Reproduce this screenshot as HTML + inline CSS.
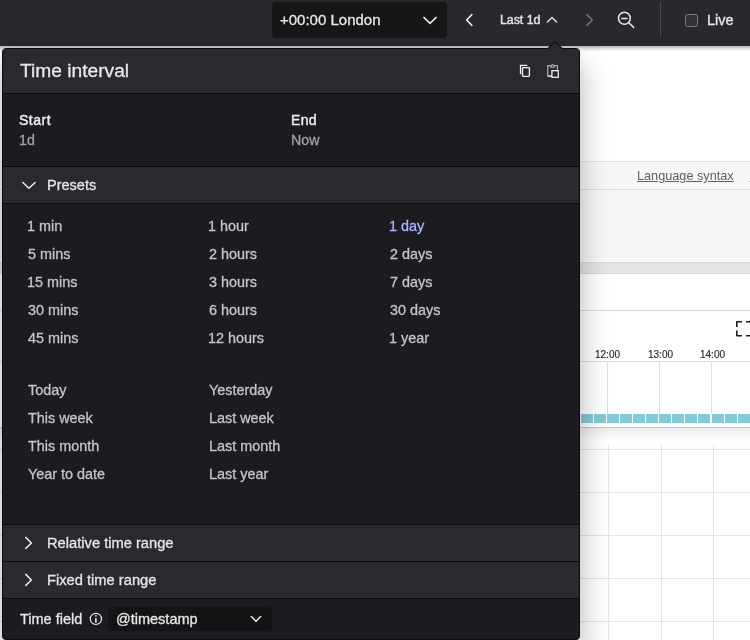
<!DOCTYPE html>
<html><head><meta charset="utf-8">
<style>
*{box-sizing:border-box;margin:0;padding:0}
html,body{width:750px;height:640px;overflow:hidden;background:#fff;font-family:"Liberation Sans",sans-serif}
.a{position:absolute}
.t{position:absolute;white-space:pre;line-height:1;will-change:transform;-webkit-text-stroke:0.3px currentColor}
.m{-webkit-text-stroke:0.45px currentColor}
.p{font-size:14.4px;color:#c4c4c8}
/* page background */
#bg{position:absolute;left:0;top:45px;width:750px;height:595px;background:#fff}
#topbar{position:absolute;left:0;top:0;width:750px;height:46px;background:#28282d}
#pop{position:absolute;left:2px;top:48px;width:578px;height:592px;background:#1c1c20;border:1px solid #0b0b0d;border-radius:4px;box-shadow:0 16px 30px rgba(0,0,0,0.3)}
</style></head><body>
<div id="bg">
  <div class="a" style="left:0;top:116px;width:750px;height:1px;background:#e5e5e5"></div>
  <div class="a" style="left:0;top:117px;width:750px;height:99px;background:#f7f7f7"></div>
  <div class="a" style="left:0;top:144px;width:750px;height:1px;background:#dedede"></div>
  <div class="a" style="left:0;top:217px;width:750px;height:1px;background:#d4d4d4"></div>
  <div class="a" style="left:0;top:218px;width:750px;height:10px;background:#e5e5e5"></div>
  <div class="a" style="left:0;top:228px;width:750px;height:1px;background:#dadada"></div>
  <div class="a" style="left:0;top:265px;width:750px;height:1px;background:#d8d8d8"></div>
  <span class="t" style="left:637px;top:125px;font-size:12.7px;color:#606060;text-decoration:underline;-webkit-text-stroke:0">Language syntax</span>
  <div class="a" style="left:749px;top:136px;width:1px;height:1px;background:#b0b0b0"></div>
  <svg class="a" style="left:735px;top:275px" width="15" height="17" viewBox="0 0 15 17"><path d="M7 1.8 H1.8 V7 M1.8 10.5 V15.8 H7 M11 1.8 H15 M11 15.8 H15" fill="none" stroke="#1e1e1e" stroke-width="1.6" stroke-linejoin="round"/></svg>
  <span class="t" style="left:595px;top:305px;font-size:10px;color:#2a2a2a;-webkit-text-stroke:0.15px #2a2a2a">12:00</span>
  <span class="t" style="left:647.5px;top:305px;font-size:10px;color:#2a2a2a;-webkit-text-stroke:0.15px #2a2a2a">13:00</span>
  <span class="t" style="left:699.5px;top:305px;font-size:10px;color:#2a2a2a;-webkit-text-stroke:0.15px #2a2a2a">14:00</span>
  <div class="a" style="left:0;top:316px;width:750px;height:1px;background:#dcdcdc"></div>
  <div class="a" style="left:607px;top:316px;width:1px;height:53px;background:#e2e2e2"></div>
  <div class="a" style="left:659px;top:316px;width:1px;height:53px;background:#e2e2e2"></div>
  <div class="a" style="left:711px;top:316px;width:1px;height:53px;background:#e2e2e2"></div>
  <div class="a" id="blocks" style="left:581px;top:369px;width:170px;height:9px;background:repeating-linear-gradient(90deg,#84c9d9 0,#84c9d9 12px,#fff 12px,#fff 13.05px)"></div>
  <div class="a" style="left:0;top:382px;width:750px;height:1px;background:#c4c4c4"></div>
  <div class="a" style="left:0;top:383px;width:750px;height:14px;background:linear-gradient(#ededed,#fff)"></div>
  <div class="a" style="left:608px;top:400px;width:1px;height:200px;background:#e5e5e5"></div>
  <div class="a" style="left:661px;top:400px;width:1px;height:200px;background:#e5e5e5"></div>
  <div class="a" style="left:713px;top:400px;width:1px;height:200px;background:#e5e5e5"></div>
  <div class="a" style="left:0;top:404px;width:750px;height:1px;background:#e5e5e5"></div>
  <div class="a" style="left:0;top:447px;width:750px;height:1px;background:#e5e5e5"></div>
  <div class="a" style="left:0;top:490px;width:750px;height:1px;background:#e5e5e5"></div>
  <div class="a" style="left:0;top:533px;width:750px;height:1px;background:#e5e5e5"></div>
  <div class="a" style="left:0;top:576px;width:750px;height:1px;background:#e5e5e5"></div>
  <div class="a" style="left:0;top:1px;width:750px;height:6px;background:linear-gradient(rgba(0,0,0,0.3),rgba(0,0,0,0.22) 20%,rgba(0,0,0,0.1) 50%,rgba(0,0,0,0.02) 85%,rgba(0,0,0,0))"></div>
</div>
<div id="topbar">
  <div class="a" style="left:272px;top:2px;width:175px;height:36px;background:#161618;border-radius:4px"></div>
  <span class="t" style="left:280px;top:12px;font-size:15px;color:#e8e8ea">+00:00 London</span>
  <svg class="a" style="left:418px;top:8px" width="24" height="24" viewBox="0 0 24 24"><path d="M5.8 9.4 L12 15.4 L18.2 9.4" fill="none" stroke="#ececee" stroke-width="1.5" stroke-linecap="round" stroke-linejoin="round"/></svg>
  <svg class="a" style="left:460px;top:8px" width="20" height="24" viewBox="0 0 20 24"><path d="M11.9 6.6 L6.6 12 L11.9 17.4" fill="none" stroke="#f0f0f2" stroke-width="1.5" stroke-linecap="round" stroke-linejoin="round"/></svg>
  <span class="t" style="left:499.5px;top:14px;font-size:12.3px;-webkit-text-stroke:0.4px #e8e8ea;color:#e8e8ea">Last 1d</span>
  <svg class="a" style="left:540px;top:8px" width="24" height="24" viewBox="0 0 24 24"><path d="M7.5 13.9 L12 9.6 L16.5 13.9" fill="none" stroke="#e8e8ea" stroke-width="1.4" stroke-linecap="round" stroke-linejoin="round"/></svg>
  <svg class="a" style="left:578px;top:8px" width="24" height="24" viewBox="0 0 24 24"><path d="M8.8 6.6 L14.3 12 L8.8 17.4" fill="none" stroke="#727288" stroke-width="1.5" stroke-linecap="round" stroke-linejoin="round"/></svg>
  <svg class="a" style="left:610px;top:5px" width="30" height="30" viewBox="0 0 30 30"><circle cx="14.4" cy="13.25" r="5.9" fill="none" stroke="#ececee" stroke-width="1.5"/><path d="M11.2 13.5 H17.6" stroke="#ececee" stroke-width="1.5"/><path d="M18.8 17.7 L23.6 22.4" stroke="#ececee" stroke-width="1.5" stroke-linecap="round"/></svg>
  <div class="a" style="left:660px;top:2px;width:1px;height:35px;background:#48484e"></div>
  <div class="a" style="left:685px;top:14px;width:13px;height:13px;border:1.3px solid #7c7c7e;background:#333335;border-radius:2.5px"></div>
  <span class="t" style="left:706.5px;top:13px;font-size:14.5px;color:#e8e8ea">Live</span>
</div>

<div id="pop"></div>
<svg class="a" style="left:545px;top:40px" width="20" height="10" viewBox="0 0 20 10"><path d="M1.5 9 L10 0.9 L18.5 9 Z" fill="#0b0b0d"/><path d="M2.6 9.6 L10 2.3 L17.4 9.6 Z" fill="#29292e"/></svg>

<div class="a" style="left:3px;top:49px;width:576px;height:44px;background:#29292e"></div>
<div class="a" style="left:3px;top:93px;width:576px;height:1px;background:#0c0c0e"></div>
<span class="t" style="left:20px;top:61px;font-size:19.2px;color:#e8e8ea">Time interval</span>
<svg class="a" style="left:516px;top:60px" width="20" height="22" viewBox="0 0 20 22"><path d="M4.5 13.7 V5.4 H10.8" fill="none" stroke="#f4f4f6" stroke-width="1.3" stroke-linecap="round"/><rect x="6.5" y="7.6" width="6.9" height="8.7" rx="0.5" fill="none" stroke="#f4f4f6" stroke-width="1.3"/></svg>
<svg class="a" style="left:543px;top:60px" width="20" height="22" viewBox="0 0 20 22"><path d="M9 16.1 H4.8 V5.7 H14.4 V10" fill="none" stroke="#a8a8aa" stroke-width="1.3"/><path d="M4.8 16.1 H9" stroke="#dcdcde" stroke-width="1.3"/><path d="M7.2 7.8 V5.5 L9.5 3.8 L11.8 5.5 V7.8 Z" fill="#a8a8aa"/><circle cx="9.5" cy="6.1" r="0.75" fill="#29292e"/><rect x="8.9" y="10.7" width="6.4" height="6.6" fill="none" stroke="#ececee" stroke-width="1.3"/></svg>
<span class="t m" style="left:19px;top:113px;font-size:14px;letter-spacing:0.5px;color:#ececee">Start</span>
<span class="t" style="left:19px;top:133px;font-size:14.2px;color:#a2a2a6">1d</span>
<span class="t m" style="left:291px;top:113px;font-size:14px;letter-spacing:0.3px;color:#ececee">End</span>
<span class="t" style="left:291px;top:133px;font-size:14.2px;color:#a2a2a6">Now</span>
<div class="a" style="left:3px;top:166px;width:576px;height:1px;background:#0c0c0e"></div>
<div class="a" style="left:3px;top:167px;width:576px;height:36px;background:#29292e"></div>
<div class="a" style="left:3px;top:203px;width:576px;height:1px;background:#0c0c0e"></div>
<svg class="a" style="left:16px;top:172px" width="24" height="24" viewBox="0 0 24 24"><path d="M6.9 10.5 L12.9 16.3 L19.1 10.5" fill="none" stroke="#ececee" stroke-width="1.5" stroke-linecap="round" stroke-linejoin="round"/></svg>
<span class="t" style="left:47px;top:178px;font-size:14.5px;color:#e6e6e8">Presets</span>
<div class="a" style="left:3px;top:524px;width:576px;height:1px;background:#0c0c0e"></div>
<div class="a" style="left:3px;top:525px;width:576px;height:36px;background:#29292e"></div>
<div class="a" style="left:3px;top:561px;width:576px;height:1px;background:#0c0c0e"></div>
<div class="a" style="left:3px;top:562px;width:576px;height:36px;background:#29292e"></div>
<div class="a" style="left:3px;top:598px;width:576px;height:1px;background:#0c0c0e"></div>
<svg class="a" style="left:16px;top:531px" width="24" height="24" viewBox="0 0 24 24"><path d="M9.75 6.4 L15.4 12 L9.75 17.4" fill="none" stroke="#ececee" stroke-width="1.5" stroke-linecap="round" stroke-linejoin="round"/></svg>
<span class="t" style="left:47px;top:536px;font-size:14.7px;color:#e6e6e8">Relative time range</span>
<svg class="a" style="left:16px;top:568px" width="24" height="24" viewBox="0 0 24 24"><path d="M9.75 6.4 L15.4 12 L9.75 17.4" fill="none" stroke="#ececee" stroke-width="1.5" stroke-linecap="round" stroke-linejoin="round"/></svg>
<span class="t" style="left:47px;top:573px;font-size:14.7px;color:#e6e6e8">Fixed time range</span>
<span class="t" style="left:20px;top:612px;font-size:14.5px;color:#e6e6e8">Time field</span>
<svg class="a" style="left:86px;top:607px" width="20" height="24" viewBox="0 0 20 24"><circle cx="9.9" cy="11.9" r="5.6" fill="none" stroke="#e8e8ea" stroke-width="1.2"/><rect x="9.1" y="11.2" width="1.6" height="4.4" fill="#f0f0f2"/><rect x="9.1" y="8.1" width="1.6" height="1.6" fill="#d8d8da"/></svg>
<div class="a" style="left:108px;top:607px;width:164px;height:24px;background:#141416;border-radius:4px"></div>
<span class="t" style="left:116px;top:612px;font-size:14.5px;color:#e6e6e8">@timestamp</span>
<svg class="a" style="left:244px;top:607px" width="24" height="24" viewBox="0 0 24 24"><path d="M7.3 9.6 L12 14.25 L16.7 9.6" fill="none" stroke="#ececee" stroke-width="1.4" stroke-linecap="round" stroke-linejoin="round"/></svg>
<!-- presets -->
<span class="t p" style="left:26.7px;top:219px;color:#c4c4c8">1 min</span>
<span class="t p" style="left:207.7px;top:219px;color:#c4c4c8">1 hour</span>
<span class="t p" style="left:388.7px;top:219px;color:#a9b4ff">1 day</span>
<span class="t p" style="left:27.5px;top:247px;color:#c4c4c8">5 mins</span>
<span class="t p" style="left:208.5px;top:247px;color:#c4c4c8">2 hours</span>
<span class="t p" style="left:389.5px;top:247px;color:#c4c4c8">2 days</span>
<span class="t p" style="left:26.7px;top:275px;color:#c4c4c8">15 mins</span>
<span class="t p" style="left:208.5px;top:275px;color:#c4c4c8">3 hours</span>
<span class="t p" style="left:389.5px;top:275px;color:#c4c4c8">7 days</span>
<span class="t p" style="left:27.5px;top:303px;color:#c4c4c8">30 mins</span>
<span class="t p" style="left:208.5px;top:303px;color:#c4c4c8">6 hours</span>
<span class="t p" style="left:389.5px;top:303px;color:#c4c4c8">30 days</span>
<span class="t p" style="left:27.5px;top:331px;color:#c4c4c8">45 mins</span>
<span class="t p" style="left:207.7px;top:331px;color:#c4c4c8">12 hours</span>
<span class="t p" style="left:388.7px;top:331px;color:#c4c4c8">1 year</span>
<span class="t p" style="left:27.5px;top:383px">Today</span>
<span class="t p" style="left:208.5px;top:383px">Yesterday</span>
<span class="t p" style="left:27.5px;top:411px">This week</span>
<span class="t p" style="left:208.5px;top:411px">Last week</span>
<span class="t p" style="left:27.5px;top:439px">This month</span>
<span class="t p" style="left:208.5px;top:439px">Last month</span>
<span class="t p" style="left:27.5px;top:467px">Year to date</span>
<span class="t p" style="left:208.5px;top:467px">Last year</span>
</body></html>
